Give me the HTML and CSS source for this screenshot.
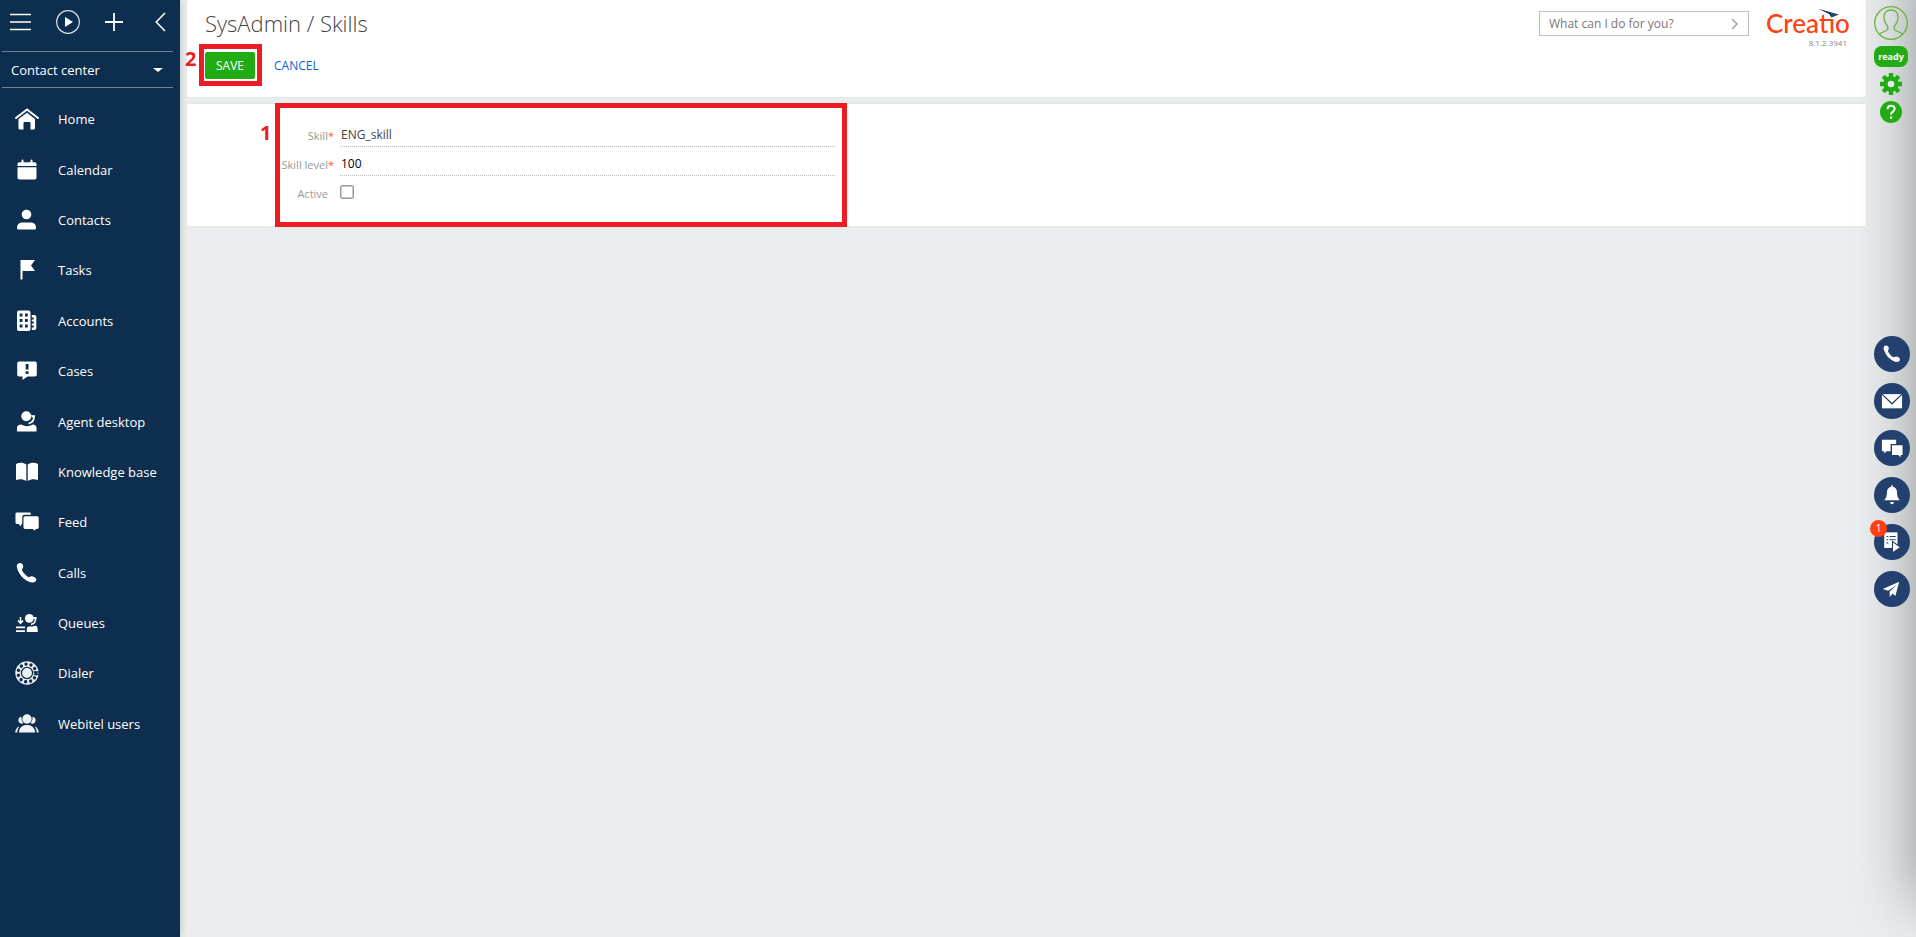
FILE: index.html
```html
<!DOCTYPE html>
<html lang="en">
<head>
<meta charset="utf-8">
<title>SysAdmin / Skills</title>
<link rel="stylesheet" href="styles.css">
</head>
<body>
<div class="app">
  <aside class="sidebar">
    <div class="tools">
      <button type="button" class="icon-button" aria-label="Menu"><svg width="21" height="20" viewBox="0 0 21 20"><path d="M0 2.500h21M0 10h21M0 17.500h21" stroke="#fff" stroke-width="1.600"/></svg></button>
      <button type="button" class="icon-button" aria-label="Run process"><svg width="24" height="24" viewBox="0 0 24 24"><circle cx="12" cy="12" r="11.300" fill="none" stroke="#dfe5ec" stroke-width="1.200"/><path d="M9 7v10l8-5z" fill="#fff"/></svg></button>
      <button type="button" class="icon-button" aria-label="Add"><svg width="18" height="18" viewBox="0 0 18 18"><path d="M9 0v18M0 9h18" stroke="#fff" stroke-width="1.800"/></svg></button>
      <button type="button" class="icon-button collapse" aria-label="Collapse"><svg width="11" height="20" viewBox="0 0 11 20"><path d="M10 1L1.200 10 10 19" fill="none" stroke="#fff" stroke-width="1.500"/></svg></button>
    </div>
    <button type="button" class="workplace">Contact center<svg width="10" height="4" viewBox="0 0 10 4"><path d="M0 0h10L5 4z" fill="#fff"/></svg></button>
    <nav class="menu">
      <a href="#"><svg viewBox="0 0 24 24"><path d="M1 11L12 2.500l11 8.500" fill="none" stroke="#fff" stroke-width="2" stroke-linecap="round"/><path d="M12 5.800l8 6.200v9a1.500 1.500 0 0 1-1.500 1.500H15.500v-6.500a1 1 0 0 0-1-1h-5a1 1 0 0 0-1 1v6.500H5A1.500 1.500 0 0 1 3.500 21v-9z" fill="#fff"/></svg>Home</a>
      <a href="#"><svg viewBox="0 0 24 24" fill="#fff"><path d="M2.500 8V6A1.800 1.800 0 0 1 4.300 4.200H6.500V2.500a1 1 0 0 1 2 0v1.700h7V2.500a1 1 0 0 1 2 0v1.700h2.200A1.800 1.800 0 0 1 21.500 6v2z"/><path d="M2.500 9.300h19v10.500a1.800 1.800 0 0 1-1.800 1.800H4.300a1.800 1.800 0 0 1-1.800-1.800z"/></svg>Calendar</a>
      <a href="#"><svg viewBox="0 0 24 24" fill="#fff"><circle cx="11.500" cy="6.500" r="4.800"/><path d="M2 20c0-4 2.500-5.500 5.500-5.500h8c3 0 5.500 1.500 5.500 5.500a1.500 1.500 0 0 1-1.500 1.500H3.500A1.500 1.500 0 0 1 2 20z"/></svg>Contacts</a>
      <a href="#"><svg viewBox="0 0 24 24" fill="#fff"><path d="M5.500 2h14.500l-4 5.500 4 5.500H7.500v8.500h-2z"/></svg>Tasks</a>
      <a href="#"><svg viewBox="0 0 24 24"><rect x="2" y="1.500" width="13.500" height="20.500" rx="2" fill="#fff"/><path d="M4.700 4.500h2.800v3H4.700zM10 4.500h2.800v3H10zM4.700 10h2.800v3H4.700zM10 10h2.800v3H10zM4.700 15.500h2.800v3H4.700zM10 15.500h2.800v3H10z" fill="#0d2e4e"/><path d="M16.800 6h2.700A1.800 1.800 0 0 1 21.300 7.800v11.400a1.800 1.800 0 0 1-1.800 1.800h-2.700v-2.500h2V16.500h-2V14.500h2v-2h-2v-2h2v-2h-2z" fill="#fff"/></svg>Accounts</a>
      <a href="#"><svg viewBox="0 0 24 24"><path d="M4 2.500h16A1.800 1.800 0 0 1 21.800 4.300v11.500A1.800 1.800 0 0 1 20 17.600h-7.500L7.500 21v-3.400H4a1.800 1.800 0 0 1-1.800-1.800V4.300A1.800 1.800 0 0 1 4 2.500z" fill="#fff"/><path d="M10.700 5h2.800v5.500h-2.800zM10.700 12.300h2.800V15h-2.800z" fill="#0d2e4e"/></svg>Cases</a>
      <a href="#"><svg viewBox="0 0 24 24" fill="#fff"><circle cx="11.300" cy="6.200" r="5"/><path d="M15.500 5.200h4.300v2.500h-2z"/><path d="M18.800 5.500c.6 4.500-1.500 7.300-5.300 8" fill="none" stroke="#fff" stroke-width="1.600"/><path d="M2 21.500v-3.500c0-2.300 1.500-3.400 4.500-3.500 3.500 2.300 7.500 2.300 11 0 2.700.1 4 1.200 4 3.500v3.500z"/></svg>Agent desktop</a>
      <a href="#"><svg viewBox="0 0 24 24" fill="#fff"><path d="M1 4c3.500-1.700 7-1.700 10.300.5V21C8 18.900 4.500 18.800 1 20zM12.700 4.500C16 2.300 19.500 2.300 23 4v16c-3.500-1.200-7-1.100-10.300 1z"/></svg>Knowledge base</a>
      <a href="#"><svg viewBox="0 0 25 24" fill="#fff"><path d="M2 2h13a1.500 1.500 0 0 1 1.500 1.500v1H10A2.500 2.500 0 0 0 7.500 7v6.500L5.500 16.500 4 14H2a1.500 1.500 0 0 1-1.500-1.500v-9A1.500 1.500 0 0 1 2 2z"/><path d="M10.500 6H23a1.700 1.700 0 0 1 1.700 1.700v9.800A1.700 1.700 0 0 1 23 19.200h-1.800V21l-3-1.800h-7.700a1.700 1.700 0 0 1-1.700-1.700V7.700A1.700 1.700 0 0 1 10.500 6z"/></svg>Feed</a>
      <a href="#"><svg viewBox="0 0 24 24" fill="#fff"><path d="M2.200 3.500C3.500 1.800 5.500 1.300 7 2.800c1.500 1.800 1.700 3.400.2 5.200-.6 1 .3 2.500 1.800 4.200s3.500 3.800 5 4c1.700-1.300 3.500-1.300 5.500 0s2.500 2.600 1 4.200c-1.700 1.500-4 1.500-7 .2C8 18 4.500 13.500 2.500 8.500 1.800 6.500 1.500 4.700 2.200 3.500z"/></svg>Calls</a>
      <a href="#"><svg viewBox="0 0 24 24" fill="#fff"><path d="M5.500 6v6M3 9.500l2.500 2.800L8 9.500" fill="none" stroke="#fff" stroke-width="1.600"/><path d="M1 15.500h9v1.700H1zM1 19.200h9V21H1z"/><circle cx="14.300" cy="7.300" r="4.400"/><path d="M17.500 6h4v2.200h-2z"/><path d="M20.500 6.500c.4 3.800-1.300 6.300-4.500 7" fill="none" stroke="#fff" stroke-width="1.500"/><path d="M11.800 21v-3.200c0-1.800 1-2.300 3.200-2.300 2.500.2 4-.6 5.800-.8 1.300.5 1.900 2.300 1.900 3.800V21z"/></svg>Queues</a>
      <a href="#"><svg viewBox="0 0 24 24"><circle cx="12" cy="12" r="11.700" fill="#eef1f4"/><circle cx="12" cy="12" r="5.600" fill="none" stroke="#0d2e4e" stroke-width="1.300"/><circle cx="12" cy="12" r="8.900" fill="none" stroke="#0d2e4e" stroke-width="3.400" stroke-linecap="round" stroke-dasharray="0.010 5.074"/><path d="M19 13.500h5M18.500 11h5.500" stroke="#0d2e4e" stroke-width="1.300"/></svg>Dialer</a>
      <a href="#"><svg viewBox="0 0 24 24" fill="#f0f3f5"><circle cx="12" cy="7" r="4.700"/><path d="M3.800 20.500c.5-5 3.500-7.500 8.200-7.500s7.700 2.500 8.200 7.500z"/><path d="M6.500 4.800C3.500 5 2.500 8.500 4.200 10.500c1 1.500 3 1.500 4.200.5C6.800 9.300 6.200 7 6.500 4.800zM17.500 4.800c3 .2 4 3.700 2.300 5.700-1 1.500-3 1.500-4.200.5 1.600-1.700 2.200-4 1.900-6.200zM3.500 14.500C1.500 16 .3 18 .2 20.500h2c.1-2.300.7-4 1.800-5.500zM20.500 14.500c2 1.500 3.200 3.500 3.300 6h-2c-.1-2.300-.7-4-1.800-5.500z"/></svg>Webitel users</a>
    </nav>
  </aside>

  <main class="content">
    <header class="card header">
      <div class="heading">
        <h1>SysAdmin / Skills</h1>
        <div class="actions">
          <div class="save-wrap">
            <button type="button" class="save">SAVE</button>
            <span class="frame frame-save"></span>
            <span class="step step-save">2</span>
          </div>
          <button type="button" class="cancel">CANCEL</button>
        </div>
      </div>
      <div class="search">
        <input type="text" placeholder="What can I do for you?" aria-label="What can I do for you?">
        <button type="button" class="icon-button" aria-label="Go"><svg width="8" height="12" viewBox="0 0 8 12"><path d="M1 1l5 5-5 5" fill="none" stroke="#999" stroke-width="1.300"/></svg></button>
      </div>
      <div class="brand">
        <span class="logo">Creatio<svg class="logo-arrow" width="20" height="9" viewBox="0 0 20 9"><path d="M0 0l20 5.500-7.500 3L10.500 5z" fill="#174a7c"/><path d="M0 0l10.500 5 2 3.500-1-4.500z" fill="#0d2e4e"/></svg></span>
        <span class="version">8.1.2.3941</span>
      </div>
    </header>

    <section class="card details">
      <form class="form">
        <label for="skill">Skill<span class="required">*</span></label>
        <input id="skill" class="field" type="text" value="ENG_skill">
        <label for="level">Skill level<span class="required">*</span></label>
        <input id="level" class="field number" type="text" value="100">
        <label for="active" class="optional">Active</label>
        <input id="active" class="check" type="checkbox">
        <span class="frame frame-form"></span>
        <span class="step step-form">1</span>
      </form>
    </section>
  </main>

  <aside class="rail">
    <div class="shade"></div>
    <div class="status">
      <button type="button" class="icon-button" aria-label="Profile"><svg width="34" height="34" viewBox="0 0 34 34" fill="none" stroke="#6db33f" stroke-width="1.300"><circle cx="17" cy="17" r="16.300"/><path d="M5 28.500c2-2 5-2.500 8-4.500 1.300-1 1-3 .2-4.500C10.800 17 10 14 10 11c0-4.500 3-7 7-7s7 2.500 7 7c0 3-.8 6-3.200 8.500-.8 1.500-1.100 3.500.2 4.500 3 2 6 2.500 8 4.500"/></svg></button>
      <button type="button" class="ready">ready</button>
      <button type="button" class="icon-button" aria-label="Settings"><svg width="22" height="22" viewBox="-11 -11 22 22"><path d="M0-11V11M-11 0H11M-7.800-7.800L7.800 7.800M-7.800 7.800L7.800-7.800" stroke="#22ac14" stroke-width="4.400"/><circle r="7.800" fill="#22ac14"/><circle r="3.300" fill="#e6eaeb"/></svg></button>
      <button type="button" class="icon-button" aria-label="Help"><svg width="22" height="22" viewBox="0 0 22 22"><circle cx="11" cy="11" r="11" fill="#22ac14"/><path d="M7.500 8.300C7.500 6 9 4.800 11 4.800s3.600 1.200 3.600 3.200c0 2.500-3.500 2.800-3.500 5.500" fill="none" stroke="#fff" stroke-width="2"/><path d="M10 15.500h2.200v2.200H10z" fill="#fff"/></svg></button>
    </div>
    <div class="channels">
      <button type="button" class="channel" aria-label="Calls"><svg viewBox="0 0 24 24" fill="#fff"><path d="M3.200 4C4.300 2.500 6 2 7.500 3.500 8.800 5 9 6.500 7.800 8c-.5 1 .2 2.300 1.700 4s3 3.300 4.500 3.600c1.500-1.200 3.200-1.200 5 0s2.300 2.500 1 4c-1.500 1.300-3.700 1.300-6.500 0C8.500 17.300 5.200 13.200 3.500 8.500 2.800 6.700 2.600 5 3.200 4z"/></svg></button>
      <button type="button" class="channel" aria-label="Email"><svg viewBox="0 0 24 24"><path d="M1 4.500h22v15.500H1z" fill="#fff"/><path d="M1 4.500l11 10.500L23 4.500" fill="none" stroke="#24406f" stroke-width="1.400"/></svg></button>
      <button type="button" class="channel" aria-label="Feed"><svg viewBox="0 0 24 24" fill="#fff"><path d="M1 3h15.500v4.500H10.500v8H6L3.500 18v-2.500H1z"/><path d="M12 9h11.500v10.500h-2V22l-2.700-2.500H12z"/></svg></button>
      <button type="button" class="channel" aria-label="Notifications"><svg viewBox="0 0 24 24" fill="#fff"><path d="M11 3V1.500h2V3c3 .7 4.500 3 4.500 6 0 4 .7 6 3 8.700H3.500c2.300-2.700 3-4.700 3-8.700 0-3 1.500-5.300 4.500-6zM9.900 19.700h4.200c-.3 1.800-.9 2.300-2.100 2.300s-1.800-.5-2.100-2.300z"/></svg></button>
      <button type="button" class="channel" aria-label="Business processes"><svg viewBox="0 0 24 24"><path d="M3.500 1.500H18v17H3.500z" fill="#fff"/><path d="M6 6h2M9.500 6H16M6 9.500h2M9.500 9.500H16M6 13h2" stroke="#24406f" stroke-width="1.200"/><path d="M12.500 11.500v12.500l9-6.200z" fill="#fff" stroke="#24406f" stroke-width="1.200"/></svg><span class="badge">1</span></button>
      <button type="button" class="channel" aria-label="Messages"><svg viewBox="0 0 24 24" fill="#fff"><path d="M19.800 4L2 12l5.800 2L17 7.500l-7.500 7.300v6l3.200-3.800 3 2.500z"/></svg></button>
    </div>
  </aside>
</div>
</body>
</html>
```
FILE: styles.css
```css
* {
  box-sizing: border-box;
}

body {
  margin: 0;
  background: #e9edee;
  color: #444;
  font-family: "Open Sans", "Noto Sans", sans-serif;
  font-size: 13px;
}

button,
input {
  margin: 0;
  padding: 0;
  border: 0;
  background: none;
  color: inherit;
  font: inherit;
}

svg {
  display: block;
}

.app {
  display: flex;
  min-height: 100vh;
  overflow: hidden;
}

/* Sidebar */

.sidebar {
  display: flex;
  flex-direction: column;
  flex: none;
  width: 180px;
  background: #0d2e4e;
  box-shadow: 0 0 8px rgba(0, 0, 0, 0.2);
  color: #fff;
  font-weight: 500;
}

.tools {
  display: flex;
  align-items: center;
  gap: 25px;
  height: 51px;
  padding: 0 14px 7px 10px;
}

.collapse {
  margin-left: auto;
}

.workplace {
  display: flex;
  align-items: center;
  justify-content: space-between;
  height: 37px;
  margin: 0 7px 0 2px;
  padding: 0 10px 0 9px;
  border-top: 1px solid #6f8397;
  border-bottom: 1px solid #6f8397;
}

.menu {
  display: flex;
  flex-direction: column;
  height: 655px;
  margin-top: 6px;
}

.menu a {
  display: flex;
  flex: 1;
  align-items: center;
  gap: 19px;
  padding-left: 15px;
  color: inherit;
  text-decoration: none;
}

.menu svg {
  width: 24px;
  height: 24px;
}

/* Content */

.content {
  flex: 1;
  min-width: 0;
  padding-left: 7px;
}

.card {
  background: #fff;
  border-radius: 2px;
  box-shadow: 0 0 1px 1px #e3e6e7;
}

.header {
  display: flex;
  align-items: flex-start;
  height: 97px;
  padding: 0 17px 0 18px;
}

.heading {
  flex: 1;
}

h1 {
  margin: 8px 0 14px;
  font-size: 22px;
  font-weight: 300;
  line-height: 30px;
}

.actions {
  display: flex;
  align-items: center;
  gap: 19px;
}

.save-wrap {
  position: relative;
}

.save,
.cancel {
  display: block;
  height: 27px;
  font-size: 12px;
}

.save {
  width: 50px;
  border-radius: 2px;
  background: #22ac14;
  color: #fff;
}

.cancel {
  color: #0d64d8;
}

.search {
  display: flex;
  align-items: center;
  width: 210px;
  height: 25px;
  margin: 11px 17px 0 0;
  padding: 0 9px;
  border: 1px solid #bfbfbf;
}

.search input {
  flex: 1;
  min-width: 0;
  font-size: 12px;
}

.search input::placeholder {
  color: #777;
  opacity: 1;
}

.brand {
  display: flex;
  flex-direction: column;
  width: 83px;
  margin-top: 8px;
}

.logo {
  position: relative;
  color: #ff4013;
  font-family: Lato, sans-serif;
  font-size: 26px;
  font-weight: 500;
  line-height: 30px;
}

.logo-arrow {
  position: absolute;
  top: 1px;
  right: 10px;
}

.version {
  padding-right: 2px;
  color: #888;
  font-size: 8px;
  line-height: 10px;
  text-align: right;
}

.details {
  height: 122px;
  margin-top: 7px;
}

.form {
  position: relative;
  display: grid;
  grid-template-columns: 53px 495px;
  grid-auto-rows: 29px;
  column-gap: 6px;
  width: 572px;
  margin-left: 88px;
  padding: 14px 0 21px 6px;
}

.form label {
  color: #999;
  font-size: 11px;
  line-height: 36px;
  text-align: right;
  white-space: nowrap;
}

.form .optional {
  padding-right: 6px;
}

.required {
  color: #ff5c3a;
}

.field {
  width: 100%;
  height: 29px;
  padding: 5px 0 0 1px;
  border-bottom: 1px dotted #bbb;
  font-size: 12px;
}

.number {
  color: #000;
}

.check {
  appearance: none;
  width: 14px;
  height: 14px;
  margin-top: 9px;
  border: 1px solid #999;
  border-radius: 2px;
  box-shadow: inset 0 0 0 1px #ccc;
}

/* Numbered highlights */

.frame {
  position: absolute;
  border: 5px solid #ed1c24;
  pointer-events: none;
}

.frame-save {
  inset: -8px -7px -7px -6px;
}

.frame-form {
  inset: -1px 0;
}

.step {
  position: absolute;
  color: #ed1c24;
  font-size: 20px;
  font-weight: 700;
  line-height: 24px;
}

.step-save {
  top: -5px;
  left: -20px;
}

.step-form {
  top: 17px;
  left: -15px;
}

/* Right rail */

.rail {
  position: relative;
  display: grid;
  grid-template-rows: 1fr auto 1fr;
  justify-items: center;
  flex: none;
  width: 50px;
}

.shade {
  position: absolute;
  top: -40px;
  bottom: 36px;
  left: 100%;
  width: 100px;
  box-shadow: 0 0 60px rgba(0, 0, 0, 0.4);
}

.status {
  position: relative;
  display: flex;
  flex-direction: column;
  align-items: center;
  gap: 6px;
  padding-top: 6px;
}

.ready {
  width: 34px;
  height: 21px;
  border-radius: 8px;
  background: #22ac14;
  color: #fff;
  font-size: 9px;
  font-weight: 700;
  line-height: 18px;
}

.channels {
  position: relative;
  display: flex;
  flex-direction: column;
  gap: 11px;
  padding: 6px 0 0 2px;
}

.channel {
  position: relative;
  display: flex;
  align-items: center;
  justify-content: center;
  width: 36px;
  height: 36px;
  border-radius: 50%;
  background: #24406f;
}

.channel svg {
  width: 22px;
  height: 22px;
}

.badge {
  position: absolute;
  top: -4px;
  left: -4px;
  width: 17px;
  height: 17px;
  border-radius: 50%;
  background: #ff4013;
  color: #fff;
  font-size: 10px;
  line-height: 17px;
}
```
